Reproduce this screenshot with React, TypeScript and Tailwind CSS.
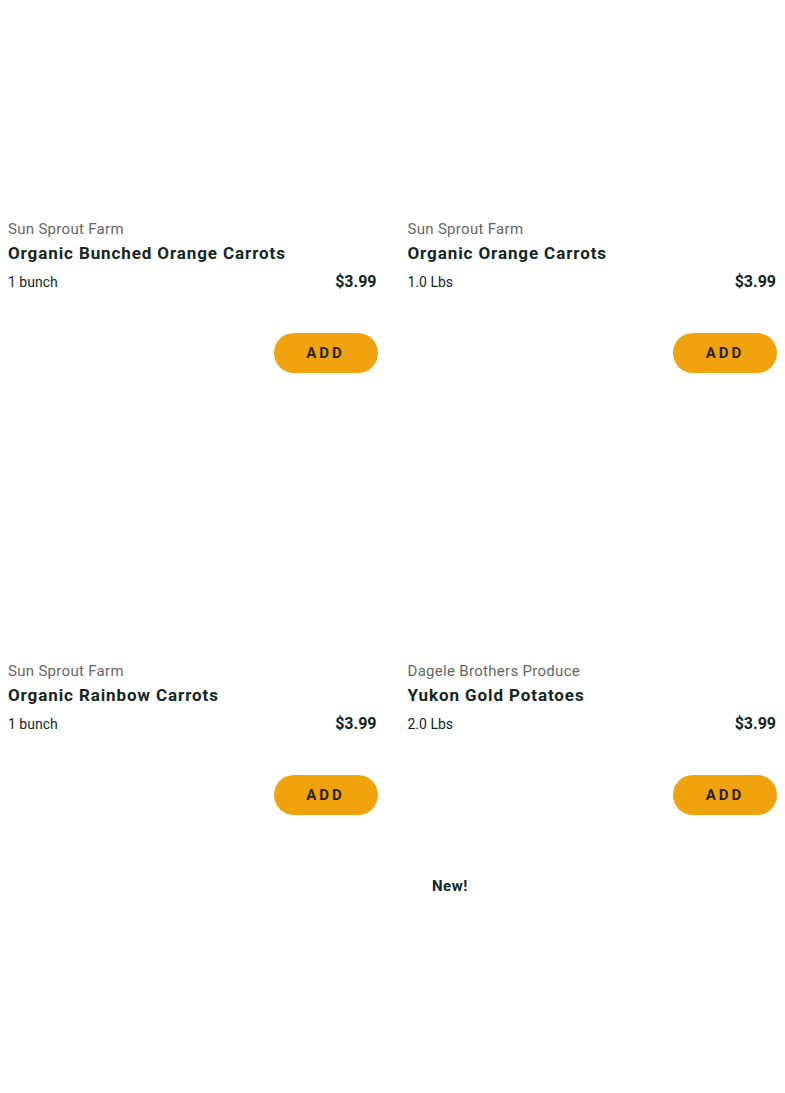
const products = [
  { farm: "Sun Sprout Farm", name: "Organic Bunched Orange Carrots", qty: "1 bunch", price: "$3.99" },
  { farm: "Sun Sprout Farm", name: "Organic Orange Carrots", qty: "1.0 Lbs", price: "$3.99" },
  { farm: "Sun Sprout Farm", name: "Organic Rainbow Carrots", qty: "1 bunch", price: "$3.99" },
  { farm: "Dagele Brothers Produce", name: "Yukon Gold Potatoes", qty: "2.0 Lbs", price: "$3.99" },
];

function ProductCard({ farm, name, qty, price }) {
  return (
    <div className="flex flex-col">
      <div className="h-[218px]" />
      <p className="text-[15px] leading-[22px] tracking-[0.3px] text-[#666666]">{farm}</p>
      <h3 className="mt-[1px] text-[17px] font-bold leading-[24px] tracking-[0.9px] text-[#12261f]">{name}</h3>
      <div className="mt-[7px] flex items-center justify-between">
        <span className="text-[14px] leading-[20px] text-[#12261f]">{qty}</span>
        <span className="pr-[1px] text-[16px] font-bold leading-[20px] text-[#12261f]">{price}</span>
      </div>
      <div className="mt-[41px] flex justify-end">
        <button className="h-[40px] w-[104px] rounded-full bg-[#f0a30c] text-[15px] font-bold tracking-[3px] text-[#2a1f0a]">
          ADD
        </button>
      </div>
    </div>
  );
}

export default function App() {
  return (
    <div className="min-h-[1093px] bg-white px-2 font-['Roboto',sans-serif]">
      <div className="grid grid-cols-2 gap-x-[30px] gap-y-[69px]">
        {products.map((p) => (
          <ProductCard key={p.name} {...p} />
        ))}
      </div>
      <div className="mt-[59px] pl-[424px]">
        <span className="text-[15px] font-bold tracking-[0.5px] text-[#12261f]">New!</span>
      </div>
    </div>
  );
}
